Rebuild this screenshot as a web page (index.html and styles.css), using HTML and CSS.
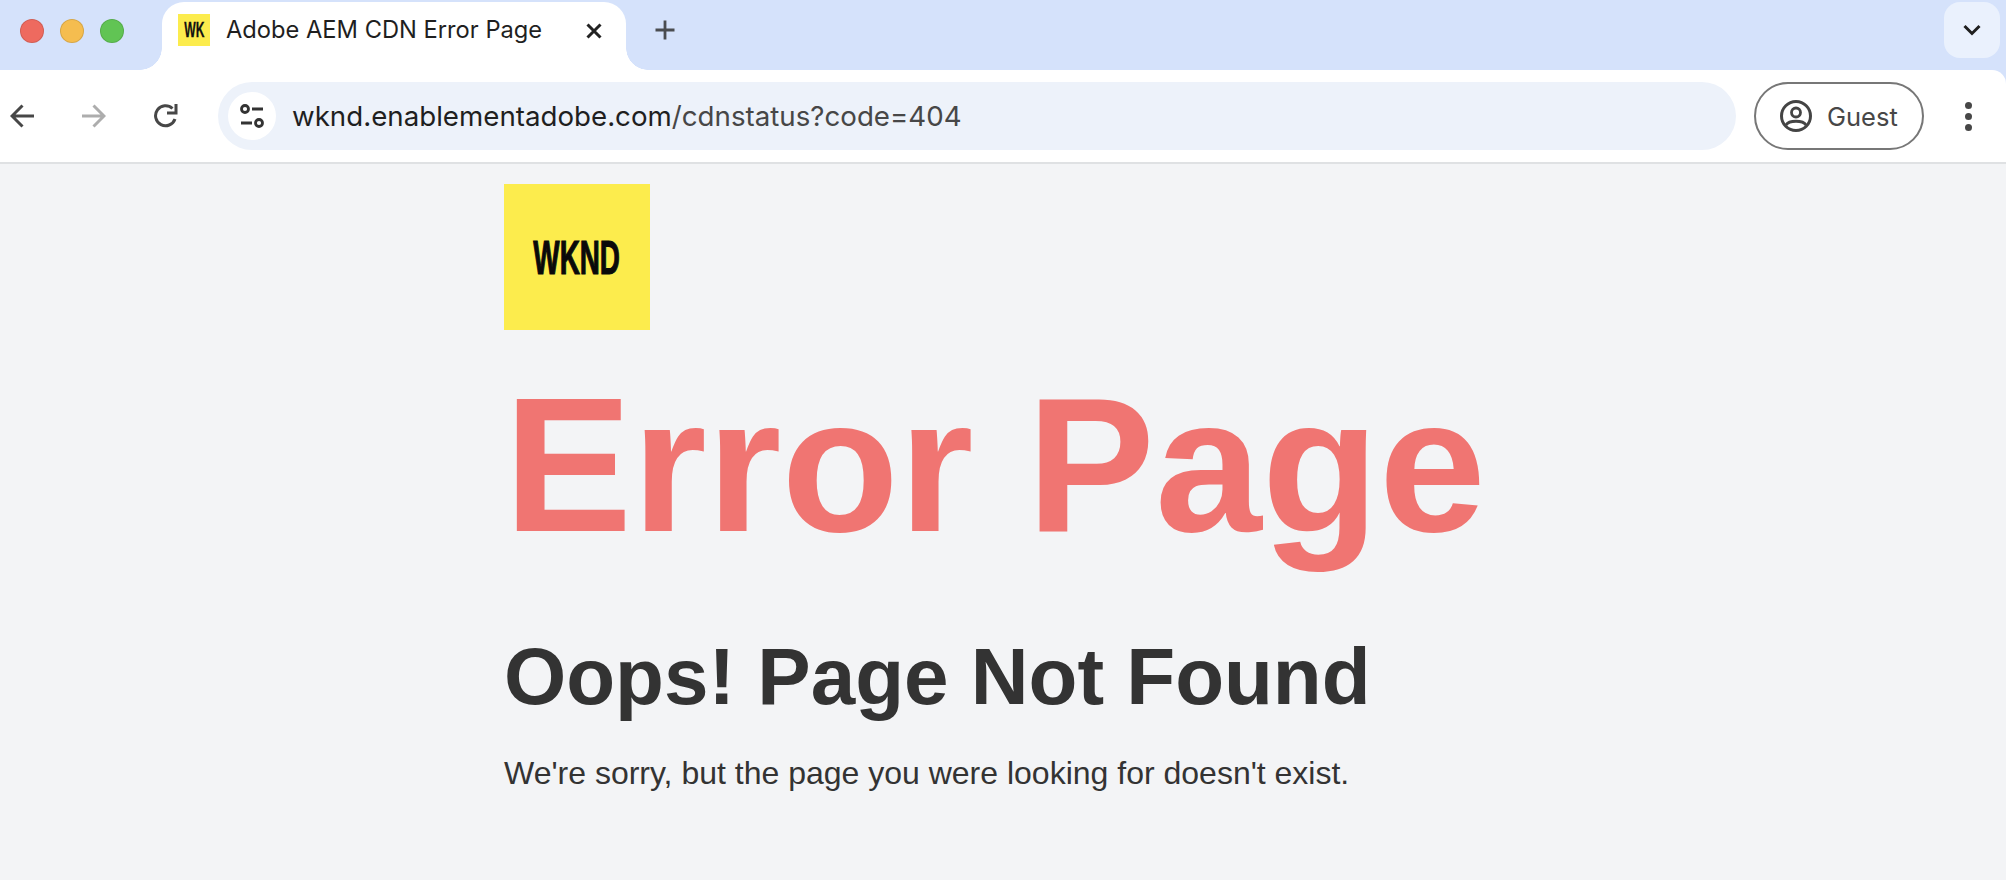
FILE: index.html
```html
<!DOCTYPE html>
<html lang="en">

<head>
    <meta charset="UTF-8">
    <meta name="viewport" content="width=device-width, initial-scale=1.0">
    <title>Adobe AEM CDN Error Page</title>
    <link rel="stylesheet" href="styles.css">
</head>

<body>

    <header class="browser">
        <div class="tabstrip">
            <div class="lights">
                <span class="light light-red"></span>
                <span class="light light-yellow"></span>
                <span class="light light-green"></span>
            </div>
            <div class="tab">
                <div class="favicon"><span class="favicon-text">WK</span></div>
                <span class="tab-title">Adobe AEM CDN Error Page</span>
                <svg class="tab-close" viewBox="0 0 16 16">
                    <path d="M1.500 1.500 14.500 14.500M14.500 1.500 1.500 14.500" fill="none" stroke="#222" stroke-width="3"></path>
                </svg>
            </div>
            <svg class="new-tab" viewBox="0 0 20 20">
                <path d="M10 0.500V19.500M0.500 10H19.500" fill="none" stroke="#4a4c50" stroke-width="2.800"></path>
            </svg>
            <div class="tab-search">
                <svg width="18" height="12" viewBox="0 0 18 12">
                    <path d="M1.500 2 9 9.500 16.500 2" fill="none" stroke="#1f1f1f" stroke-width="3"></path>
                </svg>
            </div>
        </div>

        <div class="toolbar">
            <svg class="nav-icon" viewBox="0 0 24 24">
                <path d="M24 12H2.500M12.500 1.500 2 12 12.500 22.500" fill="none" stroke="#474747" stroke-width="3"></path>
            </svg>
            <svg class="nav-icon nav-forward" viewBox="0 0 24 24">
                <path d="M0 12H21.500M11.500 1.500 22 12 11.500 22.500" fill="none" stroke="#adadad" stroke-width="3"></path>
            </svg>
            <svg class="nav-icon nav-reload" viewBox="0 0 24 24">
                <path d="M21 15A10 10 0 1 1 18.500 4.500" fill="none" stroke="#474747" stroke-width="3"></path>
                <path d="M23.500 0V10.500H13V7.500H20.500V0Z" fill="#474747"></path>
            </svg>
            <div class="omnibox">
                <span class="site-info">
                    <svg width="24" height="24" viewBox="0 0 24 24">
                        <circle cx="5" cy="5" r="3.500" fill="none" stroke="#333" stroke-width="2.800"></circle>
                        <path d="M12 5H23M1 19H12" fill="none" stroke="#333" stroke-width="2.800"></path>
                        <circle cx="19" cy="19" r="3.500" fill="none" stroke="#333" stroke-width="2.800"></circle>
                    </svg>
                </span>
                <span class="url">wknd.enablementadobe.com<span class="url-path">/cdnstatus?code=404</span></span>
            </div>
            <div class="profile">
                <svg width="32" height="32" viewBox="0 0 32 32">
                    <circle cx="16" cy="16" r="14.500" fill="none" stroke="#444" stroke-width="3"></circle>
                    <circle cx="16" cy="12.500" r="4.500" fill="none" stroke="#444" stroke-width="2.800"></circle>
                    <path d="M6 25C9 20 23 20 26 25" fill="none" stroke="#444" stroke-width="2.800"></path>
                </svg>
                <span class="profile-name">Guest</span>
            </div>
            <div class="menu-dots">
                <span></span>
                <span></span>
                <span></span>
            </div>
        </div>
    </header>

    <main class="page">
        <div class="logo"><span class="logo-text">WKND</span></div>
        <h1>Error Page</h1>
        <h2>Oops! Page Not Found</h2>
        <p>We're sorry, but the page you were looking for doesn't exist.</p>
    </main>

</body>

</html>
```

FILE: styles.css
```css
body {
    font-family: "Liberation Sans", Arial, sans-serif;
    margin: 0;
    padding: 0;
    height: 880px;
    overflow: hidden;
    background-color: #f3f4f6;
}

/* browser chrome */
.browser {
    background-color: #d5e2fb;
}

.tabstrip {
    display: flex;
    align-items: flex-start;
    height: 70px;
}

.lights {
    display: flex;
    gap: 16px;
    padding: 19px 0 0 20px;
    width: 142px;
}

.light {
    width: 24px;
    height: 24px;
    border-radius: 50%;
    box-sizing: border-box;
    border: 1px solid rgba(0, 0, 0, 0.12);
}

.light-red {
    background-color: #ee6a5f;
}

.light-yellow {
    background-color: #f5bd4f;
}

.light-green {
    background-color: #61c454;
}

.tab {
    position: relative;
    display: flex;
    align-items: flex-start;
    box-sizing: border-box;
    width: 464px;
    height: 68px;
    margin-top: 2px;
    padding: 12px 0 0 16px;
    background-color: #fff;
    border-radius: 22px 22px 0 0;
}

.tab::before,
.tab::after {
    content: "";
    position: absolute;
    bottom: 0;
    width: 22px;
    height: 22px;
}

.tab::before {
    left: -22px;
    background: radial-gradient(circle at 0 0, transparent 21.500px, #fff 22px);
}

.tab::after {
    right: -22px;
    background: radial-gradient(circle at 100% 0, transparent 21.500px, #fff 22px);
}

.favicon {
    display: flex;
    align-items: center;
    justify-content: center;
    width: 32px;
    height: 32px;
    flex-shrink: 0;
    background-color: #fcec4d;
}

.favicon-text {
    font-size: 22px;
    font-weight: bold;
    color: #111;
    transform: scaleX(0.55);
    -webkit-text-stroke: 0.3px #111;
}

.tab-title {
    margin-left: 16px;
    font-family: Inter, sans-serif;
    font-size: 23.700px;
    line-height: 32px;
    color: #1f1f1f;
    white-space: nowrap;
}

.tab-close {
    width: 16px;
    height: 16px;
    margin: 9px 24px 0 auto;
}

.new-tab {
    width: 20px;
    height: 20px;
    margin: 20px 0 0 29px;
}

.tab-search {
    display: flex;
    align-items: center;
    justify-content: center;
    width: 56px;
    height: 56px;
    margin: 2px 6px 0 auto;
    background-color: #eaf1fd;
    border-radius: 16px;
}

.toolbar {
    display: flex;
    align-items: center;
    box-sizing: border-box;
    height: 94px;
    background-color: #fff;
    border-bottom: 2px solid #dfe1e3;
    border-top-right-radius: 14px;
}

.nav-icon {
    width: 24px;
    height: 24px;
    margin-left: 10px;
    flex-shrink: 0;
}

.nav-forward {
    margin-left: 48px;
}

.nav-reload {
    margin-left: 48px;
}

.omnibox {
    display: flex;
    align-items: center;
    width: 1518px;
    height: 68px;
    margin-left: 40px;
    background-color: #edf2fa;
    border-radius: 34px;
}

.site-info {
    display: flex;
    align-items: center;
    justify-content: center;
    width: 48px;
    height: 48px;
    margin-left: 10px;
    background-color: #fff;
    border-radius: 50%;
}

.url {
    margin-left: 16px;
    font-family: Inter, sans-serif;
    font-size: 27.700px;
    color: #1f1f1f;
    white-space: nowrap;
}

.url-path {
    color: #474747;
}

.profile {
    display: flex;
    align-items: center;
    box-sizing: border-box;
    width: 170px;
    height: 68px;
    margin-left: 18px;
    padding-left: 24px;
    border: 2px solid #777;
    border-radius: 34px;
}

.profile-name {
    margin-left: 15px;
    font-family: Inter, sans-serif;
    font-size: 25.500px;
    color: #474747;
}

.menu-dots {
    display: flex;
    flex-direction: column;
    gap: 4px;
    margin-left: 41px;
}

.menu-dots span {
    width: 7px;
    height: 7px;
    background-color: #474747;
    border-radius: 50%;
}

/* page content */
.page {
    padding: 20px 0 0 504px;
}

.logo {
    display: flex;
    align-items: center;
    justify-content: center;
    width: 146px;
    height: 146px;
    background-color: #fcec4d;
}

.logo-text {
    font-size: 48px;
    font-weight: bold;
    color: #0a0a0a;
    transform: scaleX(0.58);
    -webkit-text-stroke: 1.2px #0a0a0a;
}

h1 {
    margin: 25px 0 0;
    font-size: 192px;
    line-height: 220px;
    font-weight: bold;
    color: #f07572;
}

h2 {
    margin: 53px 0 0;
    font-size: 80px;
    line-height: 98px;
    font-weight: bold;
    color: #333;
}

p {
    margin: 27px 0 0;
    font-size: 32px;
    line-height: 40px;
    color: #333;
}
```
